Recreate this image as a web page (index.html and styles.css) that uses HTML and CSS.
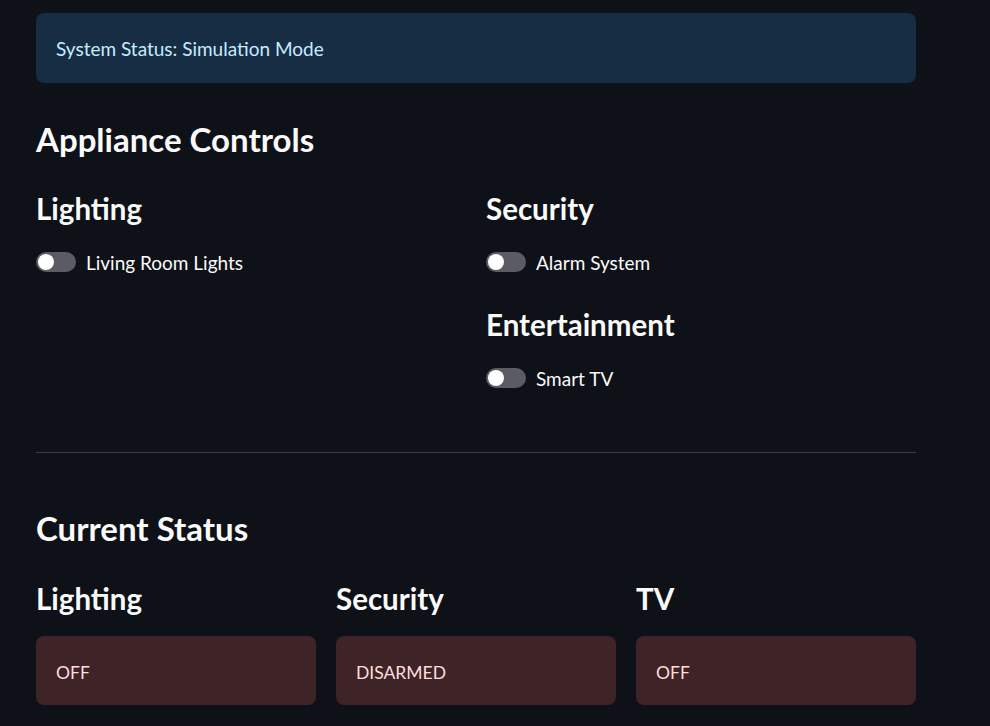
FILE: index.html
```html
<!DOCTYPE html>
<html>
<head>
<meta charset="utf-8">
<link rel="stylesheet" href="styles.css">
</head>
<body>
<main class="main">
  <div class="alert">System Status: Simulation Mode</div>
  <h2 class="h2 first">Appliance Controls</h2>
  <div class="cols two">
    <div class="col">
      <h3 class="h3">Lighting</h3>
      <label class="toggle"><span class="track"><span class="knob"></span></span><span class="tlabel">Living Room Lights</span></label>
    </div>
    <div class="col">
      <h3 class="h3">Security</h3>
      <label class="toggle"><span class="track"><span class="knob"></span></span><span class="tlabel">Alarm System</span></label>
      <h3 class="h3 second">Entertainment</h3>
      <label class="toggle"><span class="track"><span class="knob"></span></span><span class="tlabel">Smart TV</span></label>
    </div>
  </div>
  <hr class="divider">
  <h2 class="h2 after-divider">Current Status</h2>
  <div class="cols three">
    <div class="col">
      <h3 class="h3">Lighting</h3>
      <div class="status">OFF</div>
    </div>
    <div class="col">
      <h3 class="h3">Security</h3>
      <div class="status">DISARMED</div>
    </div>
    <div class="col">
      <h3 class="h3">TV</h3>
      <div class="status">OFF</div>
    </div>
  </div>
</main>
</body>
</html>
```
FILE: styles.css
```css
html, body {
  margin: 0;
  padding: 0;
  background: #0e1117;
  color: #fafafa;
  font-family: "Lato", "Noto Sans", sans-serif;
}
.main {
  width: 880px;
  padding: 13px 0 0 36px;
  display: flex;
  flex-direction: column;
}
.alert {
  box-sizing: border-box;
  height: 70px;
  padding: 0 20px;
  display: flex;
  align-items: center;
  background: #172d43;
  color: #c7ebff;
  border-radius: 8px;
  font-size: 19px;
}
.h2 {
  margin: 0;
  font-size: 33px;
  font-weight: 700;
  line-height: 44px;
}
.h2.first {
  margin-top: 34px;
}
.h2.after-divider {
  margin-top: 53px;
}
.cols {
  display: grid;
  gap: 20px;
}
.cols.two { grid-template-columns: 1fr 1fr; margin-top: 30px; }
.cols.three { grid-template-columns: 1fr 1fr 1fr; margin-top: 31px; }
.col {
  display: flex;
  flex-direction: column;
}
.h3 {
  margin: 0;
  font-size: 29.5px;
  font-weight: 700;
  line-height: 36px;
}
.h3.second { margin-top: 33px; }
.toggle {
  display: flex;
  align-items: center;
  gap: 10px;
  margin-top: 23px;
  height: 24px;
}
.track {
  width: 40px;
  height: 20px;
  border-radius: 10px;
  background: #5a5b63;
  display: flex;
  align-items: center;
  padding: 0 2px;
  box-sizing: border-box;
}
.knob {
  width: 16px;
  height: 16px;
  border-radius: 50%;
  background: #ffffff;
}
.tlabel {
  font-size: 19px;
}
.divider {
  margin: 62px 0 0 0;
  border: none;
  border-top: 1px solid #3a3c44;
  height: 0;
}
.status {
  box-sizing: border-box;
  height: 69px;
  margin-top: 19px;
  padding: 3px 20px 0 20px;
  display: flex;
  align-items: center;
  background: #3e2327;
  color: #ffdede;
  border-radius: 8px;
  font-size: 17.5px;
}
```
